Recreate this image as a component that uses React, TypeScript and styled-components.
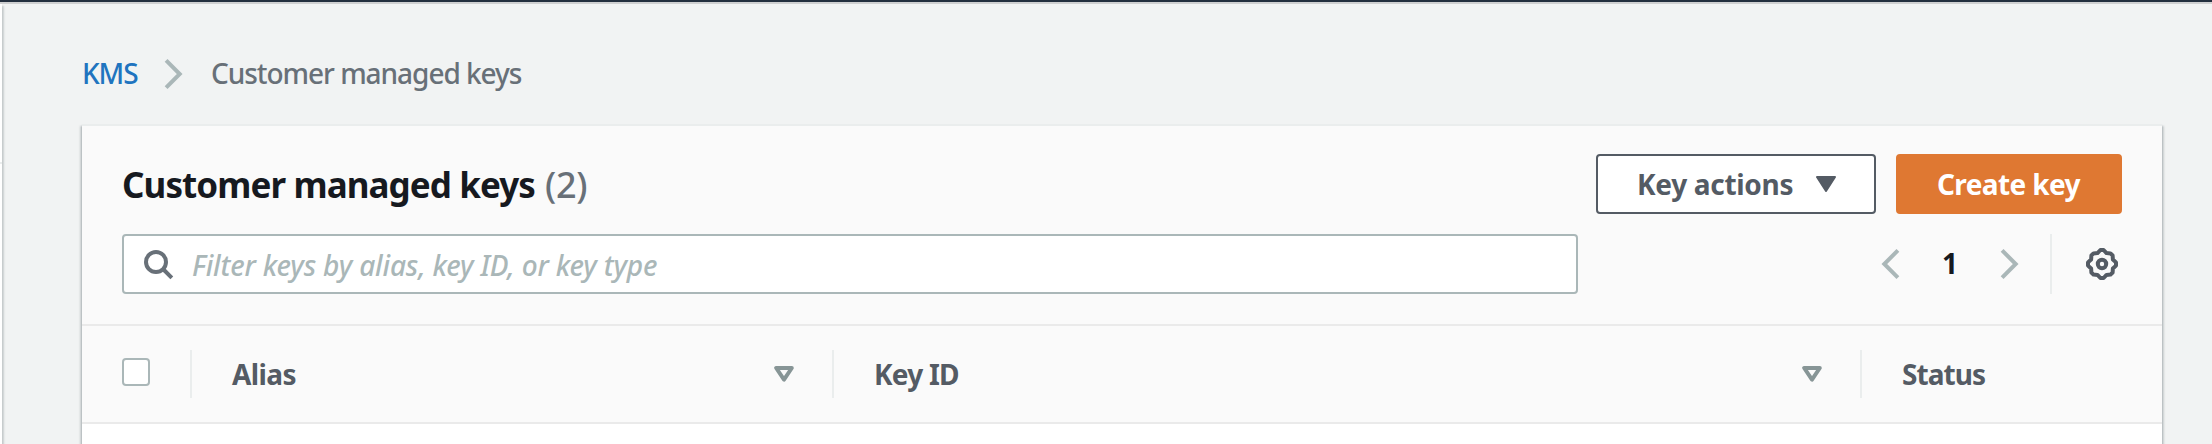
import React from 'react';
import styled, { createGlobalStyle, css } from 'styled-components';

const GlobalStyle = createGlobalStyle`
  *, *::before, *::after { box-sizing: border-box; }
  body {
    margin: 0;
    overflow: hidden;
    background: #f1f3f3;
    color: #16191f;
    font-family: 'Noto Sans', 'Open Sans', sans-serif;
    font-size: 28px;
    line-height: 40px;
  }
  svg { display: block; flex: none; }
`;

const Page = styled.div`
  display: flex;
  flex-direction: column;
  height: 444px;
`;

const TopBar = styled.header`
  flex: none;
  height: 4px;
  background: #232f3e;
  border-bottom: 2px solid #cfd0d1;
`;

const Body = styled.div`
  display: flex;
  flex: 1;
  min-height: 0;
`;

const SideNav = styled.nav`
  width: 2px;
  padding-top: 158px;
  background: #fff;
  box-shadow: 0 2px 2px rgba(0, 28, 36, 0.3), 2px 2px 2px rgba(0, 28, 36, 0.15);
`;

const NavRule = styled.div`
  height: 2px;
  background: #eaeded;
`;

const Main = styled.main`
  flex: 1;
  display: flex;
  flex-direction: column;
  padding: 49px 50px 0 80px;
`;

const Breadcrumbs = styled.div`
  display: flex;
  align-items: center;
  height: 42px;
  margin-bottom: 29px;
  line-height: 40px;
`;

const CrumbLink = styled.a`
  width: 76px;
  padding-bottom: 2px;
  color: #2074bf;
  font-weight: 500;
  letter-spacing: -1.1px;
`;

const CrumbCurrent = styled.span`
  margin-left: 21px;
  padding-bottom: 2px;
  color: #687078;
  font-weight: 500;
  letter-spacing: -1.04px;
`;

const Panel = styled.section`
  flex: 1;
  border-top: 2px solid #eaeded;
  background: #fff;
  box-shadow: 0 2px 2px rgba(0, 28, 36, 0.3), 2px 2px 2px rgba(0, 28, 36, 0.15),
    -2px 2px 2px rgba(0, 28, 36, 0.15);
`;

const PanelHeader = styled.div`
  display: flex;
  flex-direction: column;
  gap: 20px;
  padding: 28px 40px 30px;
  background: #fafafa;
  border-bottom: 2px solid #eaeaea;
`;

const HeaderRow = styled.div`
  display: flex;
  align-items: center;
  justify-content: space-between;
  height: 60px;
`;

const Title = styled.h1`
  display: flex;
  gap: 10px;
  margin: 0;
  padding-top: 2px;
  font-size: 35px;
  line-height: 58px;
  letter-spacing: -0.91px;
`;

const Count = styled.span`
  color: #687078;
  font-size: 36px;
  font-weight: 500;
  letter-spacing: -0.3px;
`;

const Actions = styled.div`
  display: flex;
  gap: 20px;
`;

const Button = styled.button<{ $primary?: boolean }>`
  display: flex;
  align-items: center;
  justify-content: space-between;
  height: 60px;
  padding: 0 38px 0 39px;
  border: 2px solid #545b64;
  border-radius: 4px;
  background: #fff;
  color: #545b64;
  font: 700 28px/40px 'Noto Sans', 'Open Sans', sans-serif;
  letter-spacing: -0.3px;
  width: 280px;
  ${({ $primary }) =>
    $primary &&
    css`
      width: 226px;
      border-color: #df7832;
      background: #df7832;
      color: #fff;
      letter-spacing: -0.62px;
    `}
`;

const ButtonLabel = styled.span`
  padding-bottom: 1px;
  white-space: nowrap;
`;

const SearchField = styled.label`
  display: flex;
  align-items: center;
  width: 1456px;
  height: 60px;
  padding-left: 20px;
  border: 2px solid #aab7b8;
  border-radius: 4px;
  background: #fff;
`;

const SearchInput = styled.input`
  flex: 1;
  height: 54px;
  margin: 2px 0 0 16px;
  padding: 0;
  border: 0;
  outline: 0;
  background: none;
  font: 500 28px/40px 'Noto Sans', 'Open Sans', sans-serif;
  &::placeholder {
    color: #aab7b8;
    opacity: 1;
    font-style: italic;
    letter-spacing: -0.16px;
  }
`;

const Pagination = styled.div`
  display: flex;
  align-items: center;
  height: 60px;
  padding-right: 4px;
`;

const PageNumber = styled.span`
  width: 88px;
  padding-bottom: 2px;
  text-align: center;
  font-weight: 700;
`;

const Divider = styled.div<{ $height: number }>`
  flex: none;
  width: 2px;
  height: ${({ $height }) => $height}px;
  background: #eaeded;
`;

const PreferencesDivider = styled(Divider)`
  margin: 0 34px 0 24px;
`;

const TableHead = styled.div`
  display: grid;
  grid-template-columns: 110px 642px 1028px 1fr;
  height: 98px;
  background: #fafafa;
  border-bottom: 2px solid #eaeaea;
`;

const HeadCell = styled.div`
  display: flex;
  align-items: center;
  justify-content: space-between;
  padding-left: 40px;
`;

const HeadLabel = styled.span<{ $tracking: number }>`
  padding-bottom: 1px;
  color: #545b64;
  font-weight: 700;
  letter-spacing: ${({ $tracking }) => $tracking}px;
`;

const CellEnd = styled.div`
  display: flex;
  align-items: center;
  gap: 38px;
`;

const Checkbox = styled.input.attrs({ type: 'checkbox' })`
  appearance: none;
  width: 28px;
  height: 28px;
  margin: 0 0 4px;
  border: 2px solid #aab7b8;
  border-radius: 4px;
  background: #fff;
`;

const Chevron = ({ left = false }: { left?: boolean }) => (
  <svg width="32" height="32" viewBox="0 0 32 32" fill="none" stroke="#aab7b8" strokeWidth="4">
    <path d={left ? 'M23.9 2.4 10.3 16l13.6 13.6' : 'M8.1 2.4 21.7 16 8.1 29.6'} />
  </svg>
);

const SearchIcon = () => (
  <svg width="32" height="32" viewBox="0 0 32 32" fill="none" stroke="#687078" strokeWidth="4">
    <circle cx="12" cy="14" r="10" />
    <path d="M19 21l8.8 8.8" />
  </svg>
);

const CaretIcon = () => (
  <svg width="20" height="16" viewBox="0 0 20 16" fill="#545b64" stroke="#545b64" strokeWidth="2" strokeLinejoin="round">
    <path d="M1 1h18L10 15z" />
  </svg>
);

const SortIcon = () => (
  <svg width="20" height="16" viewBox="0 0 20 16" fill="none" stroke="#879596" strokeWidth="4" strokeLinejoin="round">
    <path d="M2.2 2h15.6L10 13.6z" />
  </svg>
);

const GearIcon = () => (
  <svg width="32" height="32" viewBox="0 0 32 32" fill="none" stroke="#545b64" strokeWidth="4">
    <path
      strokeLinejoin="round"
      d="M14.4 2H17.6L20.5 5.1L24.5 5.4L26.6 7.5L26.9 11.5L30 14.4V17.6L26.9 20.5L26.6 24.5L24.5 26.6L20.5 26.9L17.6 30H14.4L11.5 26.9L7.5 26.6L5.4 24.5L5.1 20.5L2 17.6V14.4L5.1 11.5L5.4 7.5L7.5 5.4L11.5 5.1Z"
    />
    <circle cx="16" cy="16" r="4.2" />
  </svg>
);

export default function App() {
  return (
    <Page>
      <GlobalStyle />
      <TopBar />
      <Body>
        <SideNav>
          <NavRule />
        </SideNav>
        <Main>
          <Breadcrumbs>
            <CrumbLink>KMS</CrumbLink>
            <Chevron />
            <CrumbCurrent>Customer managed keys</CrumbCurrent>
          </Breadcrumbs>
          <Panel>
            <PanelHeader>
              <HeaderRow>
                <Title>
                  Customer managed keys <Count>(2)</Count>
                </Title>
                <Actions>
                  <Button>
                    <ButtonLabel>Key actions</ButtonLabel>
                    <CaretIcon />
                  </Button>
                  <Button $primary>
                    <ButtonLabel>Create key</ButtonLabel>
                  </Button>
                </Actions>
              </HeaderRow>
              <HeaderRow>
                <SearchField>
                  <SearchIcon />
                  <SearchInput placeholder="Filter keys by alias, key ID, or key type" />
                </SearchField>
                <Pagination>
                  <Chevron left />
                  <PageNumber>1</PageNumber>
                  <Chevron />
                  <PreferencesDivider $height={60} />
                  <GearIcon />
                </Pagination>
              </HeaderRow>
            </PanelHeader>
            <TableHead>
              <HeadCell>
                <Checkbox aria-label="Select all keys" />
                <Divider $height={48} />
              </HeadCell>
              <HeadCell>
                <HeadLabel $tracking={-0.6}>Alias</HeadLabel>
                <CellEnd>
                  <SortIcon />
                  <Divider $height={48} />
                </CellEnd>
              </HeadCell>
              <HeadCell>
                <HeadLabel $tracking={-0.78}>Key ID</HeadLabel>
                <CellEnd>
                  <SortIcon />
                  <Divider $height={48} />
                </CellEnd>
              </HeadCell>
              <HeadCell>
                <HeadLabel $tracking={-0.94}>Status</HeadLabel>
              </HeadCell>
            </TableHead>
          </Panel>
        </Main>
      </Body>
    </Page>
  );
}
